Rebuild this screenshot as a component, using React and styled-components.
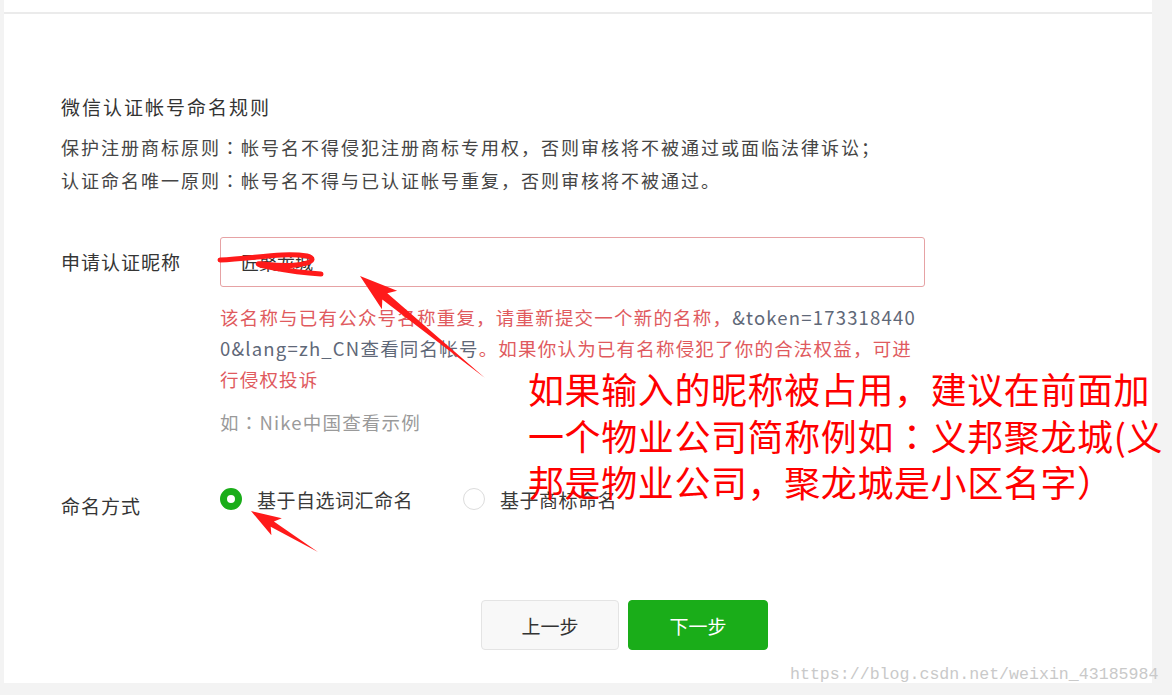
import { styled, createGlobalStyle } from 'styled-components'

const GlobalStyle = createGlobalStyle`
  html, body {
    margin: 0;
    padding: 0;
    background: #f3f3f3;
  }
  body {
    font-family: "Noto Sans CJK SC", "Noto Sans", sans-serif;
  }
`

const Page = styled.div`
  position: relative;
  width: 1172px;
  height: 695px;
  overflow: hidden;
  background: #f3f3f3;
`

const Card = styled.div`
  margin-left: 4px;
  width: 1148px;
  height: 683px;
  background: #fff;
  box-sizing: border-box;
  padding-top: 12px;
`

const TopRule = styled.div`
  height: 2px;
  background: #ebebeb;
`

const Content = styled.div`
  padding-left: 57px;
  color: #353535;
`

// centred full-width colon, as in the original font
const Colon = styled.span`
  font-family: "Noto Sans CJK TC", "Noto Sans CJK SC", sans-serif;
`

const Rules = styled.section`
  margin-top: 76px;

  & h3 {
    margin: 0 0 8px;
    font-size: 19px;
    font-weight: 400;
    letter-spacing: 2px;
    line-height: 33px;
    color: #333;
  }

  & p {
    margin: 0;
    font-size: 18px;
    letter-spacing: 2px;
    line-height: 33px;
    color: #454545;
    white-space: nowrap;
  }
`

const FormRow = styled.div`
  display: grid;
  grid-template-columns: 159px 1fr;
  margin-top: ${({ $top }) => $top}px;
`

const Label = styled.label`
  font-size: 19px;
  letter-spacing: 1px;
  line-height: ${({ $lh }) => $lh || 50}px;
  padding-top: ${({ $offset }) => $offset || 0}px;
  color: #353535;
`

const InputWrap = styled.div`
  position: relative;
  width: 705px;
`

const Input = styled.div`
  box-sizing: border-box;
  height: 50px;
  padding-left: 20px;
  border: 1px solid #e6a2a4;
  border-radius: 3px;
  font-size: 18px;
  line-height: 48px;
  color: #333;
`

const Scribble = styled.svg`
  position: absolute;
  left: -4px;
  top: 15px;
`

const ErrorText = styled.div`
  margin-top: 15px;
  font-size: 18.5px;
  letter-spacing: 1.2px;
  line-height: 31px;
  color: #e05a5e;

  & span {
    display: block;
    white-space: nowrap;
  }
  & em {
    font-style: normal;
    color: #5f6878;
  }
`

const Hint = styled.div`
  margin-top: 12px;
  font-size: 18.5px;
  letter-spacing: 1.2px;
  line-height: 31px;
  color: #9a9a9a;
`

const RadioGroup = styled.div`
  display: flex;
  align-items: center;
  height: 40px;
`

const RadioItem = styled.label`
  display: flex;
  align-items: center;
  gap: 15px;
  margin-right: 50px;
  font-size: 19px;
  letter-spacing: 0.5px;
  color: #3a3a3a;
`

const RadioDot = styled.span`
  box-sizing: border-box;
  width: 22px;
  height: 22px;
  border-radius: 50%;
  background: #fff;
  border: ${({ $checked }) => ($checked ? '7px solid #1aad19' : '1.5px solid #dcdcdc')};
`

const Actions = styled.div`
  display: flex;
  gap: 9px;
  margin-top: 74px;
  padding-left: 420px;
`

const Button = styled.button`
  box-sizing: border-box;
  width: ${({ $primary }) => ($primary ? 140 : 138)}px;
  height: 50px;
  border-radius: 4px;
  font-family: inherit;
  font-size: 19px;
  cursor: pointer;
  ${({ $primary }) =>
    $primary
      ? `
      color: #fff;
      background: #1aad19;
      border: 1px solid #1aad19;
    `
      : `
      color: #333;
      background: #f8f8f8;
      border: 1px solid #e4e4e4;
    `}
`

const Note = styled.div`
  position: absolute;
  left: 528px;
  top: 365px;
  font-size: 36px;
  letter-spacing: 0.6px;
  line-height: 46.5px;
  color: #ff0000;
  white-space: nowrap;
`

const Arrows = styled.svg`
  position: absolute;
  left: 0;
  top: 0;
  pointer-events: none;
`

const Watermark = styled.div`
  position: absolute;
  left: 790px;
  top: 663px;
  font-family: "Liberation Mono", monospace;
  font-size: 16.6px;
  line-height: 24px;
  color: #c9c9c9;
  white-space: nowrap;
`

export default function App() {
  return (
    <Page>
      <GlobalStyle />
      <Card>
        <TopRule />
        <Content>
          <Rules>
            <h3>微信认证帐号命名规则</h3>
            <p>保护注册商标原则<Colon>：</Colon>帐号名不得侵犯注册商标专用权，否则审核将不被通过或面临法律诉讼；</p>
            <p>认证命名唯一原则<Colon>：</Colon>帐号名不得与已认证帐号重复，否则审核将不被通过。</p>
          </Rules>

          <FormRow $top={40}>
            <Label>申请认证昵称</Label>
            <div>
              <InputWrap>
                <Input>匠聚龙城</Input>
                <Scribble width="120" height="30" viewBox="214 250 120 30">
                  <path
                    d="M218 258 C 250 257, 280 250, 305 254 C 320 258, 300 267, 262 262 C 240 260, 285 270, 319 272"
                    fill="none"
                    stroke="#ff1a1a"
                    strokeWidth="5"
                    strokeLinecap="round"
                  />
                </Scribble>
              </InputWrap>
              <ErrorText>
                <span>
                  该名称与已有公众号名称重复，请重新提交一个新的名称，<em>&amp;token=173318440</em>
                </span>
                <span>
                  <em>0&amp;lang=zh_CN查看同名帐号</em>。如果你认为已有名称侵犯了你的合法权益，可进
                </span>
                <span>行侵权投诉</span>
              </ErrorText>
              <Hint>如<Colon>：</Colon>Nike中国查看示例</Hint>
            </div>
          </FormRow>

          <FormRow $top={41}>
            <Label $lh={40} $offset={7}>命名方式</Label>
            <RadioGroup>
              <RadioItem>
                <RadioDot $checked />
                基于自选词汇命名
              </RadioItem>
              <RadioItem>
                <RadioDot />
                基于商标命名
              </RadioItem>
            </RadioGroup>
          </FormRow>

          <Actions>
            <Button>上一步</Button>
            <Button $primary>下一步</Button>
          </Actions>
        </Content>
      </Card>

      <Note>
        如果输入的昵称被占用，建议在前面加
        <br />
        一个物业公司简称例如<Colon>：</Colon>义邦聚龙城(义
        <br />
        邦是物业公司，聚龙城是小区名字）
      </Note>

      <Arrows width="1172" height="695" viewBox="0 0 1172 695">
        <polygon
          points="360,276 381.9,309.3 382.3,299.4 485,378 387.3,293.2 397.1,290.7"
          fill="#ff1a1a"
        />
        <polygon
          points="251,511 271.4,535.2 270.7,526.7 318,552 273.9,521.5 281.8,518.2"
          fill="#ff1a1a"
        />
      </Arrows>

      <Watermark>https://blog.csdn.net/weixin_43185984</Watermark>
    </Page>
  )
}
